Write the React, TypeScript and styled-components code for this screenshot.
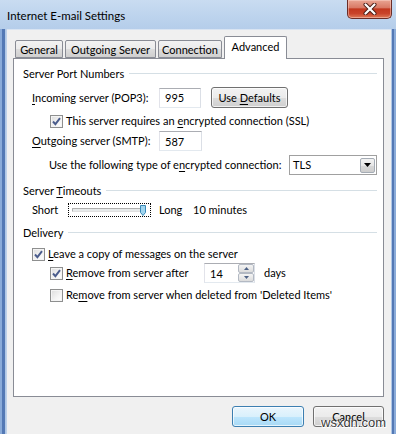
import React from 'react';
import styled, { createGlobalStyle } from 'styled-components';

const Global = createGlobalStyle`
  html, body { margin: 0; padding: 0; background: #fff; }
  body {
    width: 396px; height: 434px; overflow: hidden;
    font-family: Lato, "Noto Sans", sans-serif;
    font-size: 11px; color: #000;
  }
  * { box-sizing: border-box; }
`;

const Window = styled.div`
  position: relative;
  width: 396px;
  height: 434px;
  display: flex;
  flex-direction: column;
  overflow: hidden;
  background: #b9cfea;
`;

const TitleBar = styled.div`
  height: 29px;
  flex: none;
  display: flex;
  align-items: flex-start;
  padding-left: 7px;
  background: linear-gradient(to bottom, #c9dcf1 0%, #bcd3ed 60%, #b5cdea 100%);
`;

const Title = styled.div`
  line-height: 32px;
  font-size: 11.5px;
  color: #000;
  white-space: nowrap;
`;

const CloseBtn = styled.div`
  margin-left: auto;
  margin-right: 4px;
  width: 45px;
  height: 19px;
  border: 1px solid #6b2d27;
  border-top: none;
  border-radius: 0 0 5px 5px;
  background: linear-gradient(to bottom, #e9a593 0%, #d97a66 42%, #c2381f 50%, #c9432a 75%, #de7a58 100%);
  box-shadow: inset 0 0 0 1px rgba(255, 220, 210, 0.45);
  display: flex;
  align-items: center;
  justify-content: center;
`;

const Body = styled.div`
  flex: 1;
  display: flex;
  min-height: 0;
`;

const Frame = styled.div<{ $w: number; $side: 'l' | 'r' }>`
  width: ${p => p.$w}px;
  flex: none;
  background: ${p =>
    p.$side === 'l'
      ? 'linear-gradient(to right, #8aabd9 0px, #8aabd9 2px, #5479b5 2px, #5479b5 5px, #aac3e3 5px, #c4d6ed 7px)'
      : 'linear-gradient(to right, #c4d6ed 0px, #9cb8de 1px, #5479b5 1px, #5479b5 3px, #8aabd9 3px)'};
`;

const Client = styled.div`
  flex: 1;
  min-width: 0;
  overflow: hidden;
  background: #f0f0f0;
  display: flex;
  flex-direction: column;
  padding: 7px 7px 0 6px;
  border-top: 1px solid #d9e4f2;
`;

const TabStrip = styled.div`
  height: 22px;
  flex: none;
  display: flex;
  align-items: flex-end;
  padding-left: 2px;
  margin-top: -1px;
  position: relative;
  z-index: 2;
`;

const Tab = styled.div<{ $w: number; $active?: boolean }>`
  width: ${p => p.$w}px;
  height: ${p => (p.$active ? 23 : 18)}px;
  margin-bottom: ${p => (p.$active ? -1 : 0)}px;
  margin-right: ${p => (p.$active ? 0 : 2)}px;
  flex: none;
  border: 1px solid #898c95;
  border-bottom: ${p => (p.$active ? 'none' : '1px solid #898c95')};
  border-radius: 2px 2px 0 0;
  background: ${p => (p.$active ? '#fff' : 'linear-gradient(to bottom, #f2f2f2 0%, #ebebeb 50%, #dddddd 51%, #cfcfcf 100%)')};
  display: flex;
  justify-content: center;
  align-items: ${p => (p.$active ? 'flex-start' : 'center')};
  padding-top: ${p => (p.$active ? 2 : 1)}px;
  line-height: 16px;
  white-space: nowrap;
`;

const Panel = styled.div`
  height: 339px;
  flex: none;
  background: #fff;
  border: 1px solid #898c95;
  display: flex;
  flex-direction: column;
  padding: 0 6px 0 9px;
`;

const GroupHeader = styled.div<{ $mt: number }>`
  margin-top: ${p => p.$mt}px;
  height: 14px;
  display: flex;
  align-items: center;
  gap: 5px;
  white-space: nowrap;
  &::after {
    content: '';
    flex: 1;
    border-top: 1px solid #d5dfe5;
    margin-top: 1px;
  }
`;

const Row = styled.div<{ $mt: number; $h: number; $indent: number }>`
  margin-top: ${p => p.$mt}px;
  height: ${p => p.$h}px;
  padding-left: ${p => p.$indent}px;
  display: flex;
  align-items: center;
  white-space: nowrap;
`;

const Label = styled.span<{ $w?: number; $ml?: number }>`
  display: inline-block;
  width: ${p => (p.$w ? `${p.$w}px` : 'auto')};
  margin-left: ${p => p.$ml ?? 0}px;
  flex: none;
  line-height: 16px;
`;

const U = styled.span`
  text-decoration: underline;
  text-underline-offset: 2px;
  text-decoration-thickness: 1px;
`;

const TextBox = styled.div<{ $w: number }>`
  width: ${p => p.$w}px;
  height: 20px;
  flex: none;
  border: 1px solid #abadb3;
  border-left-color: #e2e3ea;
  border-right-color: #dbdfe6;
  border-bottom-color: #e3e9ef;
  background: #fff;
  padding-left: 5px;
  display: flex;
  align-items: center;
`;

const Button = styled.div<{ $w: number; $h: number; $default?: boolean; $ml?: number }>`
  width: ${p => p.$w}px;
  height: ${p => p.$h}px;
  margin-left: ${p => p.$ml ?? 0}px;
  flex: none;
  border: 1px solid ${p => (p.$default ? '#3c7fb1' : '#707070')};
  border-radius: 3px;
  background: ${p =>
    p.$default
      ? 'linear-gradient(to bottom, #eaf6fd 0%, #d9f0fc 50%, #bee6fd 51%, #a7d9f5 100%)'
      : 'linear-gradient(to bottom, #f2f2f2 0%, #ebebeb 50%, #dddddd 51%, #cfcfcf 100%)'};
  box-shadow: inset 0 0 0 1px rgba(255, 255, 255, 0.7);
  display: flex;
  align-items: center;
  justify-content: center;
  line-height: 16px;
  white-space: nowrap;
`;

const CheckBox = styled.div`
  width: 13px;
  height: 13px;
  flex: none;
  border: 1px solid #8e8f8f;
  background: linear-gradient(135deg, #dcdcdc 0%, #f4f4f4 60%, #ffffff 100%);
  box-shadow: inset 0 0 0 1px #f4f4f4;
  display: flex;
  align-items: center;
  justify-content: center;
`;

const Select = styled.div`
  width: 88px;
  height: 20px;
  flex: none;
  border: 1px solid #a0a0a0;
  background: #fff;
  display: flex;
  align-items: center;
  padding: 0 1px 0 3px;
`;

const SelectText = styled.span`
  flex: 1;
  line-height: 16px;
`;

const DropBtn = styled.div`
  width: 15px;
  height: 15px;
  border: 1px solid #a5acb5;
  border-radius: 2px;
  background: linear-gradient(to bottom, #f3f3f3 0%, #e6e6e6 50%, #d8d8d8 51%, #cdcdcd 100%);
  display: flex;
  align-items: center;
  justify-content: center;
`;

const SliderBox = styled.div`
  width: 83px;
  height: 14px;
  flex: none;
  border: 1px dotted #000;
  position: relative;
  display: flex;
  align-items: center;
  padding: 0 4px 0 3px;
`;

const Track = styled.div`
  flex: 1;
  height: 4px;
  border: 1px solid #b0b0b0;
  border-bottom-color: #e0e0e0;
  border-right-color: #e0e0e0;
  background: #e7eaea;
  border-radius: 1px;
`;

const Thumb = styled.svg`
  position: absolute;
  right: 4px;
  top: 1px;
`;

const SpinBox = styled.div`
  width: 51px;
  height: 20px;
  flex: none;
  border: 1px solid #abadb3;
  border-left-color: #e2e3ea;
  border-right-color: #dbdfe6;
  border-bottom-color: #e3e9ef;
  background: #fff;
  display: flex;
  align-items: center;
  padding-left: 5px;
`;

const SpinText = styled.span`
  flex: 1;
  line-height: 16px;
  padding-top: 2px;
`;

const SpinButtons = styled.div`
  width: 16px;
  height: 18px;
  display: flex;
  flex-direction: column;
`;

const SpinBtn = styled.div`
  flex: 1;
  border: 1px solid #b3b9c3;
  border-radius: 2px;
  background: linear-gradient(to bottom, #f4f4f4, #dcdcdc);
  display: flex;
  align-items: center;
  justify-content: center;
`;

const Footer = styled.div`
  margin-top: 9px;
  display: flex;
  justify-content: flex-end;
  gap: 9px;
`;

const Watermark = styled.div`
  position: absolute;
  left: 321px;
  top: 416px;
  font-family: "Liberation Sans", Arial, sans-serif;
  font-size: 13px;
  line-height: 14px;
  color: #3a3a3a;
  text-shadow: 1px 1px 0 #fff, -1px 0 0 #fff, 0 1px 0 #fff;
  white-space: nowrap;
`;

const Check = () => (
  <svg width="9" height="9" viewBox="0 0 9 9">
    <path d="M1 4.5 L3.4 7.2 L8 1.2" fill="none" stroke="#4a5c8c" strokeWidth="1.9" strokeLinejoin="miter" />
  </svg>
);

const CheckRow: React.FC<{ checked?: boolean; children: React.ReactNode; w?: number }> = ({ checked, children, w }) => (
  <>
    <CheckBox>{checked && <Check />}</CheckBox>
    <Label $ml={3} $w={w}>{children}</Label>
  </>
);

export default function App() {
  return (
    <>
      <Global />
      <Window>
        <TitleBar>
          <Title>Internet E-mail Settings</Title>
          <CloseBtn>
            <svg width="14" height="12" viewBox="0 0 14 12">
              <path d="M2.5 1.5 L11.5 10.5 M11.5 1.5 L2.5 10.5" stroke="#4a1c16" strokeWidth="4" strokeLinecap="round" />
              <path d="M2.5 1.5 L11.5 10.5 M11.5 1.5 L2.5 10.5" stroke="#ffffff" strokeWidth="2.2" strokeLinecap="round" />
            </svg>
          </CloseBtn>
        </TitleBar>
        <Body>
          <Frame $w={7} $side="l" />
          <Client>
            <TabStrip>
              <Tab $w={48}>General</Tab>
              <Tab $w={91}>Outgoing Server</Tab>
              <Tab $w={64}>Connection</Tab>
              <Tab $w={63} $active>Advanced</Tab>
            </TabStrip>
            <Panel>
              <GroupHeader $mt={7}><span>Server Port Numbers</span></GroupHeader>
              <Row $mt={7} $h={21} $indent={9}>
                <Label $w={127}><U>I</U>ncoming server (POP3):</Label>
                <TextBox $w={42}>995</TextBox>
                <Button $w={77} $h={21} $ml={10}><span>Use <U>D</U>efaults</span></Button>
              </Row>
              <Row $mt={3} $h={20} $indent={27}>
                <CheckRow checked>This server requires an <U>e</U>ncrypted connection (SSL)</CheckRow>
              </Row>
              <Row $mt={0} $h={20} $indent={9}>
                <Label $w={127}><U>O</U>utgoing server (SMTP):</Label>
                <TextBox $w={43}>587</TextBox>
              </Row>
              <Row $mt={4} $h={20} $indent={26}>
                <Label $w={240}>Use the following type of e<U>n</U>crypted connection:</Label>
                <Select>
                  <SelectText>TLS</SelectText>
                  <DropBtn>
                    <svg width="7" height="4" viewBox="0 0 7 4"><path d="M0 0 H7 L3.5 4 Z" fill="#000" /></svg>
                  </DropBtn>
                </Select>
              </Row>
              <GroupHeader $mt={8}><span>Server <U>T</U>imeouts</span></GroupHeader>
              <Row $mt={3} $h={20} $indent={9}>
                <Label $w={36}>Short</Label>
                <SliderBox>
                  <Track />
                  <Thumb width="6" height="11" viewBox="0 0 6 11">
                    <path d="M0.5 0.5 H5.5 V7.5 L3 10.5 L0.5 7.5 Z" fill="#9fd4ee" stroke="#3b8ab8" strokeWidth="1" />
                  </Thumb>
                </SliderBox>
                <Label $ml={8} $w={34}>Long</Label>
                <Label>10 minutes</Label>
              </Row>
              <GroupHeader $mt={5}><span>Delivery</span></GroupHeader>
              <Row $mt={6} $h={18} $indent={9}>
                <CheckRow checked><U>L</U>eave a copy of messages on the server</CheckRow>
              </Row>
              <Row $mt={0} $h={20} $indent={27}>
                <CheckRow checked w={138}><U>R</U>emove from server after</CheckRow>
                <SpinBox>
                  <SpinText>14</SpinText>
                  <SpinButtons>
                    <SpinBtn>
                      <svg width="5" height="3" viewBox="0 0 5 3"><path d="M0 3 H5 L2.5 0 Z" fill="#4d6185" /></svg>
                    </SpinBtn>
                    <SpinBtn>
                      <svg width="5" height="3" viewBox="0 0 5 3"><path d="M0 0 H5 L2.5 3 Z" fill="#4d6185" /></svg>
                    </SpinBtn>
                  </SpinButtons>
                </SpinBox>
                <Label $ml={9}>days</Label>
              </Row>
              <Row $mt={3} $h={18} $indent={27}>
                <CheckRow>Re<U>m</U>ove from server when deleted from 'Deleted Items'</CheckRow>
              </Row>
            </Panel>
            <Footer>
              <Button $w={72} $h={21} $default>OK</Button>
              <Button $w={71} $h={21}>Cancel</Button>
            </Footer>
          </Client>
          <Frame $w={5} $side="r" />
        </Body>
        <Watermark>wsxdn.com</Watermark>
      </Window>
    </>
  );
}
